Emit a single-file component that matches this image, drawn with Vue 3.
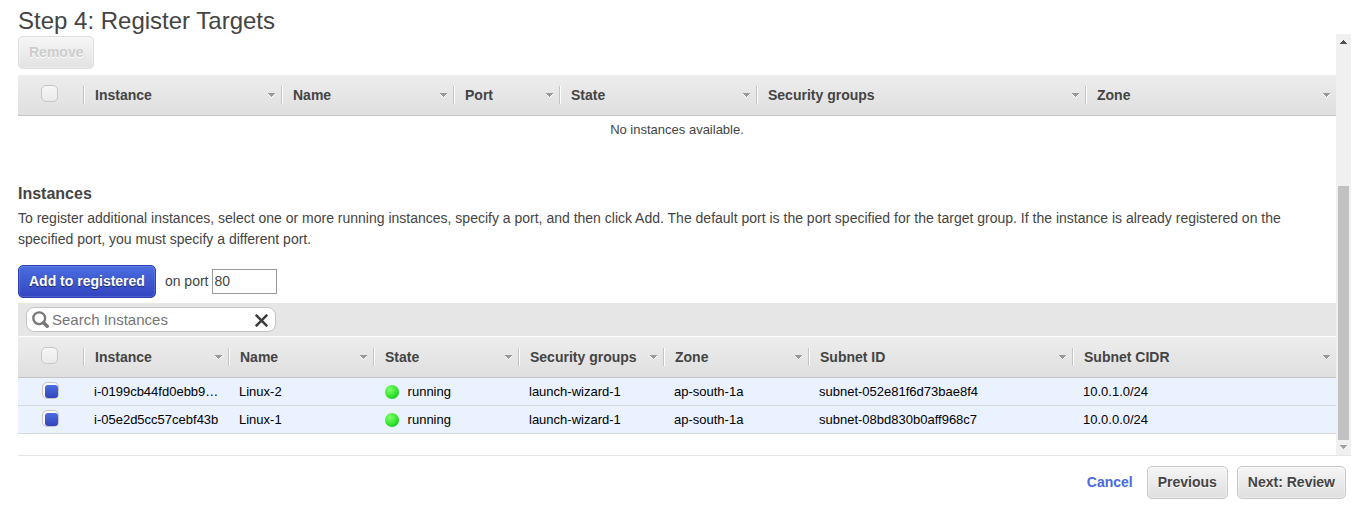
<script setup>
const targetCols = [
  { label: 'Instance', w: 198 },
  { label: 'Name', w: 172 },
  { label: 'Port', w: 106 },
  { label: 'State', w: 197 },
  { label: 'Security groups', w: 329 },
  { label: 'Zone', w: 251 },
]
const instanceCols = [
  { label: 'Instance', w: 145 },
  { label: 'Name', w: 145 },
  { label: 'State', w: 145 },
  { label: 'Security groups', w: 145 },
  { label: 'Zone', w: 145 },
  { label: 'Subnet ID', w: 264 },
  { label: 'Subnet CIDR', w: 264 },
]
const rows = [
  ['i-0199cb44fd0ebb9d1', 'Linux-2', 'running', 'launch-wizard-1', 'ap-south-1a', 'subnet-052e81f6d73bae8f4', '10.0.1.0/24'],
  ['i-05e2d5cc57cebf43b', 'Linux-1', 'running', 'launch-wizard-1', 'ap-south-1a', 'subnet-08bd830b0aff968c7', '10.0.0.0/24'],
]
const grid = (cols) => ({ gridTemplateColumns: '65px ' + cols.map((c) => c.w + 'px').join(' ') })
</script>

<template>
  <div class="page">
    <h1>Step 4: Register Targets</h1>
    <div class="pane">
      <div class="content">
        <button class="btn disabled" disabled>Remove</button>

        <div class="thead first" :style="grid(targetCols)">
          <div class="check-cell"><span class="check"></span></div>
          <div v-for="c in targetCols" :key="c.label" class="th">
            <span>{{ c.label }}</span>
            <svg class="arrow" width="7" height="5" shape-rendering="crispEdges"><path d="M0 1h7v1H6v1H5v1H4v1H3V4H2V3H1V2H0z" fill="#fff" /><path d="M0 0h7v1H6v1H5v1H4v1H3V3H2V2H1V1H0z" fill="#999" /></svg>
          </div>
        </div>
        <div class="empty">No instances available.</div>

        <h2>Instances</h2>
        <p>To register additional instances, select one or more running instances, specify a port, and then click Add. The default port is the port specified for the target group. If the instance is already registered on the specified port, you must specify a different port.</p>

        <div class="add-row">
          <button class="btn primary">Add to registered</button>
          <span class="on-port">on port</span>
          <input class="port" type="text" value="80" />
        </div>

        <div class="toolbar">
          <div class="search">
            <svg class="lens" width="18" height="18" viewBox="0 0 18 18"><circle cx="7.2" cy="7.2" r="5.9" fill="none" stroke="#777" stroke-width="2.3" /><path d="M11.6 11.8L15.2 15.2" stroke="#777" stroke-width="3.6" stroke-linecap="round" /></svg>
            <input type="text" placeholder="Search Instances" />
            <svg class="clear" width="13" height="13" viewBox="0 0 13 13"><path d="M.8 .8L12.2 12.2M12.2 .8L.8 12.2" stroke="#3c3c3c" stroke-width="2.5" /></svg>
          </div>
        </div>

        <div class="thead" :style="grid(instanceCols)">
          <div class="check-cell"><span class="check"></span></div>
          <div v-for="c in instanceCols" :key="c.label" class="th">
            <span>{{ c.label }}</span>
            <svg class="arrow" width="7" height="5" shape-rendering="crispEdges"><path d="M0 1h7v1H6v1H5v1H4v1H3V4H2V3H1V2H0z" fill="#fff" /><path d="M0 0h7v1H6v1H5v1H4v1H3V3H2V2H1V1H0z" fill="#999" /></svg>
          </div>
        </div>
        <div v-for="r in rows" :key="r[0]" class="row" :style="grid(instanceCols)">
          <div class="check-cell"><span class="check on"><i></i></span></div>
          <div v-for="(v, i) in r" :key="i" class="td"><span v-if="i === 2" class="dot"></span>{{ v }}</div>
        </div>
      </div>
      <div class="scrollbar">
        <svg width="15" height="17" shape-rendering="crispEdges"><path d="M7 6h1v1h1v1h1v1h1v1H4V9h1V8h1V7h1z" fill="#505050" /></svg>
        <div class="thumb"></div>
        <svg class="down" width="15" height="15" shape-rendering="crispEdges"><path d="M4 5h7v1h-1v1H9v1H8v1H7V8H6V7H5V6H4z" fill="#a0a0a0" /></svg>
      </div>
    </div>
    <div class="footer">
      <a class="cancel">Cancel</a>
      <button class="btn">Previous</button>
      <button class="btn">Next: Review</button>
    </div>
  </div>
</template>

<style>
body { margin: 0; background: #fff; }
</style>

<style scoped>
.page {
  width: 1360px; height: 516px; box-sizing: border-box; padding: 0 9px 0 18px; overflow: hidden;
  background: #fff; color: #444; font: 14px/21px "Liberation Sans", Arial, sans-serif;
}
h1 { margin: 0; height: 34px; padding-top: 7px; box-sizing: border-box; font-size: 24px; line-height: 28px; font-weight: 400; }
.pane { display: flex; height: 421px; border-bottom: 1px solid #e5e5e5; }
.content { width: 1318px; padding-top: 2px; box-sizing: border-box; }
.btn {
  display: block; height: 33px; box-sizing: border-box; padding: 0 10px 1px; margin: 0;
  border: 1px solid #c8c8c8; border-radius: 5px; background: linear-gradient(#f5f5f5, #dfdfdf);
  box-shadow: inset 0 0 0 1px rgba(255, 255, 255, .35);
  font: bold 14px/30px "Liberation Sans", Arial, sans-serif; color: #444; text-shadow: 0 1px 0 #fff; white-space: nowrap;
}
.btn.disabled { color: #ccc; border-color: #dcdcdc; background: linear-gradient(#f6f6f6, #e2e2e2); }
.btn.primary {
  color: #fff; border-color: #2e3fb5; background: linear-gradient(#4a6ee0, #3344c0);
  box-shadow: inset 0 0 0 1px rgba(255, 255, 255, .13); text-shadow: 0 1px 1px rgba(0, 0, 0, .5);
}
.thead {
  display: grid; height: 41px; box-sizing: border-box; border-bottom: 1px solid #c4c4c4;
  background: linear-gradient(#ededed, #dfdfdf);
}
.thead.first { margin-top: 6px; }
.th {
  display: flex; justify-content: space-between; align-items: flex-start; height: 18px; margin-top: 11px;
  padding: 0 6px 0 11px; border-left: 1px solid #c4c4c4; box-shadow: inset 1px 0 #fff;
  font-weight: bold; line-height: 18px; white-space: nowrap;
}
.arrow { margin-top: 7px; }
.check-cell { display: flex; }
.check {
  width: 17px; height: 17px; box-sizing: border-box; margin: 10px 0 0 23px; border: 1px solid #c6c6c6;
  border-radius: 5px; background: linear-gradient(#f6f6f6, #eaeaea);
}
.check.on { margin: 4px 0 0 24px; background: #f8f8f8; }
.check i { display: block; width: 13px; height: 13px; margin: 2px 0 0 2px; border-radius: 3px; background: linear-gradient(#4a6ee0, #3344bb); }
.empty { height: 69px; text-align: center; font-size: 13px; line-height: 27px; }
h2 { margin: 0; font-size: 16px; line-height: 18px; }
p { margin: 5px 0 0; height: 57px; width: 1290px; }
.add-row { display: flex; align-items: center; height: 33px; margin-bottom: 5px; }
.on-port { margin: 0 3px 0 9px; }
.port {
  width: 65px; height: 25px; box-sizing: border-box; border: 1px solid #999; padding: 0 2px 1px; margin: 0;
  font: 14px "Liberation Sans", Arial, sans-serif; color: #444;
}
.toolbar { height: 33px; margin-bottom: 1px; padding: 4px 8px; box-sizing: border-box; background: #e6e6e6; }
.search {
  display: flex; align-items: center; width: 250px; height: 25px; box-sizing: border-box; padding: 0 6px 0 5px;
  border: 1px solid #c4c4c4; border-radius: 8px; background: #fff;
}
.search input {
  flex: 1; min-width: 0; padding: 0 0 0 2px; border: 0; outline: 0; background: none;
  font: 15px "Liberation Sans", Arial, sans-serif; color: #444;
}
.search input::placeholder { color: #757575; }
.lens, .clear, .arrow { flex: none; }
.lens { margin-top: 1px; }
.clear { margin: 2px 1px 0 0; }
.row { display: grid; height: 28px; box-sizing: border-box; border-bottom: 1px solid #d9d9d9; background: #eaf1ff; color: #000; font-size: 13px; line-height: 27px; }
.td { padding: 0 9px 0 11px; overflow: hidden; text-overflow: ellipsis; white-space: nowrap; }
.dot {
  display: inline-block; width: 14px; height: 14px; margin: 0 8.6px 0 1px; vertical-align: -3px; border-radius: 50%;
  background: radial-gradient(circle at 35% 30%, #7dff6a 0, #42ea38 45%, #12c41a 85%, #079c0d 100%);
}
.scrollbar { display: flex; flex-direction: column; width: 15px; height: 421px; background: #f0f0f0; }
.thumb { width: 11px; height: 254px; margin: 135px 0 0 2px; background: #c1c1c1; }
.footer { display: flex; justify-content: flex-end; align-items: center; padding: 10px 5px 0 0; gap: 9px; }
.cancel { margin-right: 5px; font-weight: bold; color: #4a6be0; }
</style>
